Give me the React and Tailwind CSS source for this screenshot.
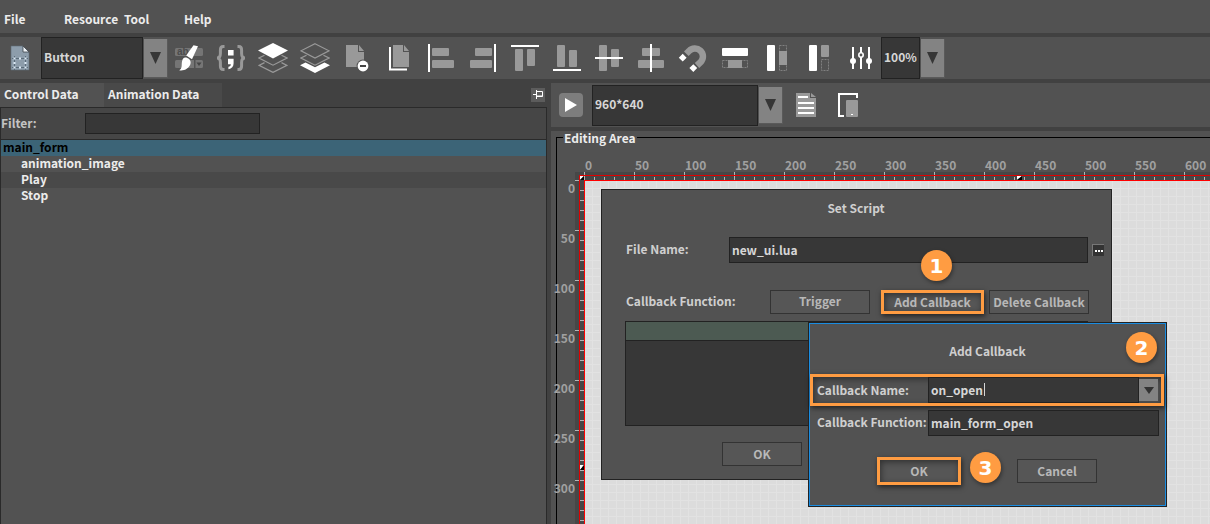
import React from "react";

const GRAY = "#999999";

function Icon({ children }) {
  return (
    <svg width="30" height="30" viewBox="0 0 30 30" fill={GRAY} aria-hidden="true">
      {children}
    </svg>
  );
}

const tools = [
  {
    name: "Style brush",
    icon: (
      <Icon>
        <rect x="1" y="5" width="28" height="8" rx="1.5" fill="#757575" />
        <path d="M2.5 17H20v8H2.500a1.500 1.500 0 0 1-1.500-1.500v-5A1.500 1.500 0 0 1 2.500 17zM21.500 17h6a1.500 1.500 0 0 1 1.500 1.500v5a1.500 1.500 0 0 1-1.500 1.500h-6z" fill="#757575" />
        <path d="M22.500 19.500h5l-2.500 3.500z" fill="#444" />
        <text x="3" y="12" fontSize="10" fontWeight="700" fontFamily="Liberation Sans, sans-serif" fill="#4c4c4c">ab</text>
        <path d="M19.500 2.200 24 3.200 18 16.200 12.200 12.600z" fill="#fff" />
        <path d="M11.300 14.600C14 14.600 17.200 17 16.600 20.200 15.600 25.600 9.500 28.200 5.200 27.200 8.600 25.600 7.300 22 8 18.600 8.500 16.200 9.600 14.600 11.300 14.600z" fill="#fff" />
      </Icon>
    ),
  },
  {
    name: "Script",
    icon: (
      <Icon>
        <path d="M8.500 3.500H7.200C4.800 3.500 4.400 5 4.400 7v3.600c0 2.600-.8 4.400-3.400 4.400 2.600 0 3.400 1.800 3.400 4.400V23c0 2 .4 3.500 2.800 3.500h1.300M21.500 3.500h1.300c2.400 0 2.800 1.500 2.800 3.500v3.600c0 2.600.8 4.400 3.400 4.400-2.600 0-3.400 1.800-3.400 4.400V23c0 2-.4 3.500-2.800 3.500h-1.300" fill="none" stroke={GRAY} strokeWidth="3" />
        <path d="M12 7h5.600v5.500H12zM12 15.800h5.600v4.400c0 3.400-1.800 5.200-5.200 6v-2.400c1.600-.4 2.400-1.300 2.400-2.600H12z" fill="#fff" />
      </Icon>
    ),
  },
  {
    name: "Move to top",
    icon: (
      <Icon>
        <path d="M6.500 12.200 1 15l14 7.200L29 15l-5.500-2.800M6.500 19.600 1 22.400l14 7L29 22.400l-5.500-2.800" fill="none" stroke={GRAY} strokeWidth="1.200" />
        <path d="M15 0 30 7.600 15 15.600 0 7.600z" fill="#fff" />
      </Icon>
    ),
  },
  {
    name: "Move to bottom",
    icon: (
      <Icon>
        <path d="M15 .7 29 7.800 15 15 1 7.800zM6.500 12.200 1 15l14 7.200L29 15l-5.500-2.800" fill="none" stroke={GRAY} strokeWidth="1.200" />
        <path d="M5.500 19.500 15 24.300l9.500-4.800L30 22.300 15 30 0 22.300z" fill="#fff" />
      </Icon>
    ),
  },
  {
    name: "Remove page",
    icon: (
      <Icon>
        <path d="M4 2h12v7h6v15H4zM17 2l5 6h-5z" />
        <circle cx="21" cy="23" r="6.400" fill="#525252" />
        <circle cx="21" cy="23" r="5.400" fill="#fff" />
        <path d="M18 22h6v2h-6z" fill="#444" />
      </Icon>
    ),
  },
  {
    name: "Copy page",
    icon: (
      <Icon>
        <path d="M9 2h10v7h6v15H9zM20 2l5 6h-5z" />
        <path d="M5 4h2v21.500h16v2H5z" fill="#fff" />
      </Icon>
    ),
  },
  {
    name: "Align left",
    icon: (
      <Icon>
        <path d="M2 1h2v28H2z" fill="#fff" />
        <rect x="6" y="5" width="17" height="8" rx="1" />
        <rect x="6" y="17" width="22" height="8" rx="1" />
      </Icon>
    ),
  },
  {
    name: "Align right",
    icon: (
      <Icon>
        <path d="M26 1h2v28h-2z" fill="#fff" />
        <rect x="7" y="5" width="17" height="8" rx="1" />
        <rect x="2" y="17" width="22" height="8" rx="1" />
      </Icon>
    ),
  },
  {
    name: "Align top",
    icon: (
      <Icon>
        <path d="M1 2h28v2H1z" fill="#fff" />
        <rect x="5" y="6" width="8" height="22" rx="1" />
        <rect x="17" y="6" width="8" height="17" rx="1" />
      </Icon>
    ),
  },
  {
    name: "Align bottom",
    icon: (
      <Icon>
        <path d="M1 26h28v2H1z" fill="#fff" />
        <rect x="5" y="2" width="8" height="22" rx="1" />
        <rect x="17" y="7" width="8" height="17" rx="1" />
      </Icon>
    ),
  },
  {
    name: "Align middle",
    icon: (
      <Icon>
        <rect x="5" y="2" width="8" height="26" rx="1" />
        <rect x="17" y="6" width="8" height="18" rx="1" />
        <path d="M1 14h28v2H1z" fill="#fff" />
      </Icon>
    ),
  },
  {
    name: "Align center",
    icon: (
      <Icon>
        <rect x="6" y="5" width="18" height="8" rx="1" />
        <rect x="2" y="17" width="26" height="8" rx="1" />
        <path d="M14 1h2v28h-2z" fill="#fff" />
      </Icon>
    ),
  },
  {
    name: "Snap",
    icon: (
      <Icon>
        <path d="M8.300 10.800 11 8.100A8 8 0 0 1 22.800 19L19 22.500" fill="none" stroke={GRAY} strokeWidth="6.500" />
        <path d="M4.700 10.800 8.600 14.700 4.700 18.600 .8 14.700zM15.300 21.200l3.900 3.900-3.900 3.900-3.900-3.900z" fill="#fff" />
      </Icon>
    ),
  },
  {
    name: "Same width",
    icon: (
      <Icon>
        <rect x="2" y="5" width="26" height="8" rx="1" fill="#fff" />
        <rect x="2.500" y="17.500" width="25" height="7" fill="none" stroke="#808080" strokeDasharray="2 1" />
        <path d="M8 17h14v8H8z" />
      </Icon>
    ),
  },
  {
    name: "Same height",
    icon: (
      <Icon>
        <rect x="5" y="2" width="8" height="26" rx="1" fill="#fff" />
        <rect x="17.500" y="2.500" width="7" height="25" fill="none" stroke="#808080" strokeDasharray="2 1" />
        <path d="M17 8h8v14h-8z" />
      </Icon>
    ),
  },
  {
    name: "Same size",
    icon: (
      <Icon>
        <rect x="5" y="2" width="8" height="26" rx="1" fill="#fff" />
        <rect x="17.500" y="16.500" width="7" height="11" fill="none" stroke="#808080" strokeDasharray="2 1" />
        <rect x="17" y="2" width="8" height="12" rx="1" />
      </Icon>
    ),
  },
  {
    name: "Settings",
    icon: (
      <Icon>
        <path d="M6 4h2v22H6zM14 4h2v22h-2zM22 4h2v22h-2z" fill="#fff" />
        <circle cx="7" cy="18" r="3" fill="#fff" />
        <circle cx="23" cy="18" r="3" fill="#fff" />
        <circle cx="15" cy="12" r="2.200" fill="#525252" stroke="#fff" strokeWidth="1.600" />
      </Icon>
    ),
  },
];

function Arrow({ className }) {
  return (
    <span className={"pointer-events-none flex items-center justify-center border-b border-r border-[#5a5a5a] bg-[#838383] " + className} aria-hidden="true">
      <svg width="11" height="12" viewBox="0 0 11 12">
        <path d="M0 0h11L5.500 12z" fill="#363636" />
      </svg>
    </span>
  );
}

function Combo({ label, value, boxClass, arrowClass }) {
  return (
    <div className="flex items-center">
      <select aria-label={label} className={"appearance-none border border-[#222] bg-[#373737] pb-0.5 text-[#d6d6d6] " + boxClass}>
        <option>{value}</option>
      </select>
      <Arrow className={"ml-px " + arrowClass} />
    </div>
  );
}

function Badge({ className, children }) {
  return (
    <span className={"absolute flex h-[31px] w-[31px] items-center justify-center rounded-full bg-[#ff9c42] font-['DejaVu_Sans',sans-serif] text-xl font-bold text-white shadow-[1px_2px_4px_rgba(0,0,0,0.4)] " + className}>
      {children}
    </span>
  );
}

const plainButton = "flex h-6 items-center justify-center whitespace-nowrap border border-[#333] bg-[#565656] text-[#b8b8b8]";
const fieldBox = "min-w-0 border border-[#222] bg-[#373737] px-0.5 pb-0.5 text-[#d6d6d6] outline-none";
const callout = "border-3 border-[#ff9c42] shadow-[1px_2px_5px_rgba(0,0,0,0.6),inset_1px_2px_6px_rgba(0,0,0,0.45)]";

function HorizontalRuler() {
  return (
    <svg className="h-[9px] min-w-0 flex-1 bg-[#474747]" aria-hidden="true">
      <defs>
        <pattern id="h-ticks" x="9" width="50" height="9" patternUnits="userSpaceOnUse">
          <path d="M0 0h1v8H0zM10 5h1v3h-1zM20 5h1v3h-1zM30 5h1v3h-1zM40 5h1v3h-1z" fill="#b4b4b4" />
        </pattern>
      </defs>
      <rect x="9" width="100%" height="9" fill="url(#h-ticks)" />
      <path d="M0 8h4v1H0z" fill="#b4b4b4" />
      <rect x="4" y="3" width="100%" height="1" fill="#e00000" />
      <rect x="4" y="3" width="1" height="6" fill="#e00000" />
      <rect x="9" y="8" width="100%" height="1" fill="#ff0000" />
      <path d="M5 4h4l-4 4z" fill="#fff" />
      <path d="M9 4v4H5z" fill="#000" />
      <path d="M442 4h5l-5 4z" fill="#fff" />
      <path d="M447 4v4h-5z" fill="#000" />
    </svg>
  );
}

function VerticalRuler() {
  return (
    <svg className="h-full w-[10px] shrink-0 bg-[#474747]" aria-hidden="true">
      <defs>
        <pattern id="v-ticks" width="10" height="50" patternUnits="userSpaceOnUse">
          <path d="M5 9h4v1H5zM5 19h4v1H5zM5 29h4v1H5zM5 39h4v1H5zM0 49h9v1H0z" fill="#b4b4b4" />
        </pattern>
      </defs>
      <rect width="10" height="100%" fill="url(#v-ticks)" />
      <rect x="4" width="1" height="100%" fill="#e00000" />
      <rect x="9" width="1" height="100%" fill="#ff0000" />
      <path d="M5 284h4l-4 5z" fill="#fff" />
      <path d="M9 284v5H5z" fill="#000" />
    </svg>
  );
}

function SetScript() {
  return (
    <section className="absolute left-4 top-2 flex h-[291px] w-[511px] flex-col border border-[#222] bg-[#525252] pl-[23px] text-[#cfcfcf]">
      <h2 className="mr-6 mt-2.5 text-center leading-4">Set Script</h2>
      <div className="mt-[21px] flex items-center">
        <label htmlFor="file-name" className="w-[104px] shrink-0 pb-0.5 pl-px">File Name:</label>
        <input id="file-name" defaultValue="new_ui.lua" className={"h-[26px] w-[359px] " + fieldBox} />
        <button aria-label="Browse" className="ml-1 flex h-3 w-3 shrink-0 items-center justify-center gap-px border-l border-t border-[#777] bg-[#333]">
          <span className="h-0.5 w-0.5 bg-white" />
          <span className="h-0.5 w-0.5 bg-white" />
          <span className="h-0.5 w-0.5 bg-white" />
        </button>
      </div>
      <div className="mt-[27px] flex items-center">
        <span className="w-[145px] pb-0.5 pl-px">Callback Function:</span>
        <button className={plainButton + " w-[100px] pb-0.5"}>Trigger</button>
        <button className={"ml-[11px] flex h-6 w-[103px] items-center justify-center whitespace-nowrap bg-[#565656] text-[#b8b8b8] " + callout}>Add Callback</button>
        <button className={plainButton + " ml-[5px] w-[100px]"}>Delete Callback</button>
      </div>
      <div className="mt-[7px] h-[105px] w-[463px] border border-[#222] bg-[#373737]">
        <div className="h-[19px] border-b border-[#222] bg-[#4c5a52]" />
      </div>
      <button className={plainButton + " ml-[97px] mt-4 w-20"}>OK</button>
      <Badge className="left-[319px] top-[60px]">1</Badge>
    </section>
  );
}

function AddCallback() {
  return (
    <section className="absolute left-[223px] top-[141px] border border-[#222] bg-[#525252] text-[#cfcfcf]">
      <div className="flex h-[183px] w-[357px] flex-col border border-[#1a8ce0]">
        <h2 className="mt-[19px] text-center leading-4">Add Callback</h2>
        <div className={"mr-px mt-[15px] flex h-8 items-center pl-1 " + callout}>
          <label htmlFor="cb-name" className="w-[111px] shrink-0 whitespace-nowrap">Callback Name:</label>
          <div className="relative flex min-w-0 flex-1">
            <input id="cb-name" defaultValue="on_open" className={"h-[26px] w-full " + fieldBox} />
            <span className="absolute left-[56px] top-1.5 h-[13px] w-px bg-[#d6d6d6]" aria-hidden="true" />
          </div>
          <button aria-label="Show callbacks" className="mr-[3px] flex h-[22px] w-[19px] items-center justify-center bg-[#838383]">
            <svg width="10" height="7" viewBox="0 0 10 7" aria-hidden="true">
              <path d="M0 0h10L5 7z" fill="#333" />
            </svg>
          </button>
        </div>
        <div className="mr-1.5 mt-1 flex items-center pl-[7px]">
          <label htmlFor="cb-fn" className="w-[111px] shrink-0 whitespace-nowrap pb-0.5">Callback Function:</label>
          <input id="cb-fn" defaultValue="main_form_open" className={"h-[26px] flex-1 " + fieldBox} />
        </div>
        <div className="mt-[21px] flex items-center pl-[67px]">
          <button className={"flex h-7 w-[84px] items-center justify-center bg-[#565656] text-[#b8b8b8] " + callout}>OK</button>
          <button className={plainButton + " ml-14 w-20"}>Cancel</button>
        </div>
      </div>
      <Badge className="left-[317px] top-[9px]">2</Badge>
      <Badge className="left-[161px] top-[129px]">3</Badge>
    </section>
  );
}

const hLabels = [0, 50, 100, 150, 200, 250, 300, 350, 400, 450, 500, 550, 600];
const vLabels = [0, 50, 100, 150, 200, 250, 300];

export default function App() {
  return (
    <div className="flex h-screen flex-col overflow-hidden bg-[#414141] font-['Noto_Sans_CJK_SC',sans-serif] text-xs font-bold leading-4 text-[#ececec]">
      <nav className="flex h-[33px] shrink-0 items-center bg-[#525252] pt-1">
        <button className="w-[60px] px-1 text-left">File</button>
        <button className="w-[60px] px-1 text-left">Resource</button>
        <button className="w-[60px] px-1 text-left">Tool</button>
        <button className="w-[60px] px-1 text-left">Help</button>
      </nav>

      <div className="mt-1 flex h-[42px] shrink-0 items-center bg-[#525252]">
        <button aria-label="New form" className="flex w-[41px] pl-2.5">
          <svg width="20" height="26" viewBox="0 0 20 26" aria-hidden="true">
            <path d="M1 1h12l6 6v18H1z" fill="#8d9dab" stroke="#5f6b75" strokeWidth=".6" />
            <path d="M13 1l6 6h-6z" fill="#eef4f8" stroke="#3c444b" strokeWidth=".8" />
            <path d="M4.500 13.500h11v9h-11zM4.500 11v14M15.500 11v14M2 13.500h16M2 22.500h16" fill="none" stroke="#5a6b79" />
            <path d="M3.500 12.500h2v2h-2zM9 12.500h2v2h-2zM14.500 12.500h2v2h-2zM3.500 17h2v2h-2zM14.500 17h2v2h-2zM3.500 21.500h2v2h-2zM9 21.500h2v2h-2zM14.500 21.500h2v2h-2z" fill="#dceaf5" />
          </svg>
        </button>
        <Combo label="Control type" value="Button" boxClass="h-[42px] w-[102px] px-0.5" arrowClass="h-[39px] w-6" />
        {tools.map((t) => (
          <button key={t.name} aria-label={t.name} className="flex w-[42px] shrink-0 justify-center">
            {t.icon}
          </button>
        ))}
        <div className="-ml-px">
          <Combo label="Zoom" value="100%" boxClass="h-[42px] w-[39px] px-0.5" arrowClass="h-[39px] w-6" />
        </div>
      </div>

      <div className="mt-1 flex min-h-0 flex-1">
        <aside className="flex w-[547px] shrink-0 flex-col">
          <div className="flex h-6 items-center">
            <button className="h-6 w-[104px] bg-[#525252] px-1 pb-0.5 text-left">Control Data</button>
            <button className="h-6 w-[118px] bg-[#494949] px-1 pb-0.5 text-left">Animation Data</button>
            <button aria-label="Pin panel" className="ml-auto mr-0.5 flex h-[14px] w-[14px] items-center justify-center bg-[#5c5c5c]">
              <svg width="12" height="12" viewBox="0 0 12 12" fill="none" stroke="#fff" aria-hidden="true">
                <path d="M1 5.500h3M4.500 1v9M4.500 2.500h6v5h-6M4.500 7h6" />
              </svg>
            </button>
          </div>
          <div className="flex min-h-0 flex-1 flex-col border-x border-t border-[#2a2a2a] bg-[#525252]">
            <div className="flex h-8 shrink-0 items-center border-b border-[#2a2a2a] bg-[#464646] text-[#c4c4c4]">
              <label htmlFor="filter" className="w-[84px] pb-0.5">Filter:</label>
              <input id="filter" className={"h-[21px] w-[175px] " + fieldBox} />
            </div>
            <ul className="leading-[14px]">
              <li className="bg-[#3c6477] pb-0.5 pl-0.5 text-black">main_form</li>
              <li className="pb-0.5 pl-5">animation_image</li>
              <li className="bg-[#494949] pb-0.5 pl-5">Play</li>
              <li className="pb-0.5 pl-5">Stop</li>
            </ul>
          </div>
        </aside>

        <main className="ml-1 flex min-w-0 flex-1 flex-col">
          <div className="flex h-11 shrink-0 items-center bg-[#525252] pl-2">
            <button aria-label="Preview" className="flex h-6 w-6 items-center justify-center rounded-sm bg-[#7d7d7d]">
              <svg width="12" height="14" viewBox="0 0 12 14" aria-hidden="true">
                <path d="M0 0 12 7 0 14z" fill="#fff" />
              </svg>
            </button>
            <div className="ml-[9px]">
              <Combo label="Resolution" value="960*640" boxClass="h-[41px] w-[166px] px-0.5" arrowClass="h-[37px] w-6" />
            </div>
            <button aria-label="Text resources" className="ml-[13px]">
              <svg width="20" height="24" viewBox="0 0 20 24" aria-hidden="true">
                <path d="M0 0h14v5h6v19H0z" fill={GRAY} />
                <path d="M15 0l5 4h-5z" fill={GRAY} />
                <path d="M2 3h10v2H2zM2 9h16v2H2zM2 14h16v2H2zM2 19h16v2H2z" fill="#fff" />
              </svg>
            </button>
            <button aria-label="Device" className="ml-[22px]">
              <svg width="20" height="24" viewBox="0 0 20 24" aria-hidden="true">
                <path d="M0 0h20v5h-2V2H2v20h4v2H0z" fill="#fff" />
                <rect x="8" y="7" width="12" height="17" rx="1" fill={GRAY} />
                <path d="M13 21h2v1h-2z" fill="#fff" />
              </svg>
            </button>
          </div>

          <section className="relative mt-1 flex min-h-0 flex-1 flex-col bg-[#525252]">
            <div className="absolute bottom-0 left-[5px] right-0 top-1.5 border-l border-t border-black" aria-hidden="true" />
            <h1 className="relative ml-3 shrink-0 self-start bg-[#525252] px-px pb-0.5 leading-[14px]">Editing Area</h1>
            <div className="relative flex h-[25px] shrink-0 items-end overflow-hidden pl-[34px] leading-[14px] text-[#a0a0a0]">
              {hLabels.map((n) => (
                <span key={n} className="w-[50px] shrink-0">{n}</span>
              ))}
            </div>
            <div className="relative flex shrink-0 pl-6">
              <HorizontalRuler />
            </div>
            <div className="relative flex min-h-0 flex-1">
              <div className="flex w-6 shrink-0 flex-col items-end text-[#a0a0a0]">
                {vLabels.map((n) => (
                  <span key={n} className="h-[50px] shrink-0 leading-[14px]">{n}</span>
                ))}
              </div>
              <VerticalRuler />
              <div className="relative min-w-0 flex-1 overflow-hidden bg-[#dcdcdc] bg-[linear-gradient(#e2e2e2_1px,transparent_1px),linear-gradient(90deg,#e2e2e2_1px,transparent_1px)] bg-[size:8px_8px] bg-[position:7px_7px]">
                <SetScript />
                <AddCallback />
              </div>
            </div>
          </section>
        </main>
      </div>
    </div>
  );
}
